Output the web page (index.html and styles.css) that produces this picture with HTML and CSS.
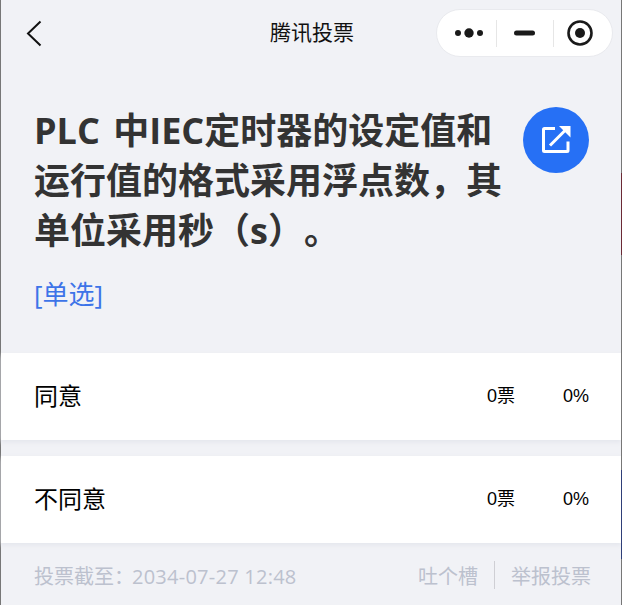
FILE: index.html
```html
<!DOCTYPE html>
<html lang="zh-CN">
<head>
    <meta charset="UTF-8">
    <meta name="viewport" content="width=device-width, initial-scale=1.0">
    <title>腾讯投票</title>
    <link rel="stylesheet" href="styles.css">
</head>
<body>
    <div class="page">
        <header class="nav">
            <svg class="back" width="18" height="28" viewBox="0 0 18 28">
                <path d="M14.500 2.500 L2 14.500 L14.500 26.500" fill="none" stroke="#111" stroke-width="2"/>
            </svg>
            <div class="navTitle">腾讯投票</div>
            <div class="capsule">
                <svg class="capsuleIcon dots" width="28" height="12" viewBox="0 0 28 12">
                    <circle cx="3" cy="6" r="3" fill="#1a1a1a"/>
                    <circle cx="14" cy="6" r="4.700" fill="#1a1a1a"/>
                    <circle cx="25" cy="6" r="3" fill="#1a1a1a"/>
                </svg>
                <span class="capsuleLine lineOne"></span>
                <svg class="capsuleIcon minus" width="21" height="6" viewBox="0 0 21 6">
                    <rect x="0" y="0.500" width="21" height="5" rx="2.500" fill="#1a1a1a"/>
                </svg>
                <span class="capsuleLine lineTwo"></span>
                <svg class="capsuleIcon target" width="26" height="26" viewBox="0 0 26 26">
                    <circle cx="13" cy="13" r="11.500" fill="none" stroke="#1a1a1a" stroke-width="2.600"/>
                    <circle cx="13" cy="13" r="5" fill="#1a1a1a"/>
                </svg>
            </div>
        </header>

        <section class="head">
            <div class="headText">
                <h1>PLC 中IEC定时器的设定值和运行值的格式采用浮点数，其单位采用秒（s）。</h1>
                <div class="voteType">[单选]</div>
            </div>
            <div class="shareBtn">
                <svg width="30" height="30" viewBox="0 0 30 30">
                    <path d="M14 3.500 H3.500 A1 1 0 0 0 2.500 4.500 V25.500 A1 1 0 0 0 3.500 26.500 H26 A1 1 0 0 0 27 25.500 V16.500" fill="none" stroke="#fff" stroke-width="3"/>
                    <path d="M9 20.500 L24 5.500" fill="none" stroke="#fff" stroke-width="3"/>
                    <path d="M18 1 H29.500 V12.500 Z" fill="#fff"/>
                </svg>
            </div>
        </section>

        <div class="options">
            <div class="option">
                <span class="optName">同意</span>
                <span class="optCount">0票</span>
                <span class="optPercent">0%</span>
            </div>
            <div class="option">
                <span class="optName">不同意</span>
                <span class="optCount">0票</span>
                <span class="optPercent">0%</span>
            </div>
        </div>

        <footer class="foot">
            <span class="deadline">投票截至：<span class="deadlineDate">2034-07-27 12:48</span></span>
            <span class="footLinks">
                <span>吐个槽</span>
                <span class="footLine"></span>
                <span>举报投票</span>
            </span>
        </footer>
    </div>
</body>
</html>
```

FILE: styles.css
```css
html, body {
    margin: 0;
    padding: 0;
}

body {
    font-family: "Open Sans", "Noto Sans CJK SC", sans-serif;
    text-spacing-trim: space-all;
    background-color: #f1f2f6;
    color: #000;
}

.page {
    position: relative;
    width: 622px;
    height: 605px;
    box-sizing: border-box;
    border-left: 1px solid #777;
    border-right: 1px solid #777;
    background-color: #f1f2f6;
}

.page::after {
    content: "";
    position: absolute;
    top: 173px;
    right: -1px;
    width: 1px;
    height: 386px;
    background: linear-gradient(to bottom, #6b2a35 0, #6b2a35 82px, #777 82px, #777 297px, #2f3f78 297px, #2f3f78 100%);
}

.nav {
    position: relative;
    height: 66px;
    display: flex;
    align-items: center;
    justify-content: space-between;
    padding: 0 8px 0 25px;
    box-sizing: border-box;
}

.back {
    display: block;
}

.navTitle {
    position: absolute;
    left: 269px;
    top: 19px;
    font-size: 21px;
    line-height: 26px;
    color: #111;
}

.capsule {
    width: 177px;
    height: 48px;
    box-sizing: border-box;
    background-color: #fff;
    border: 1px solid #e9eaee;
    border-radius: 24px;
    display: flex;
    align-items: center;
    padding-left: 18px;
}

.capsuleIcon {
    display: block;
}

.capsuleLine {
    width: 1px;
    height: 27px;
    background-color: #e6e6e6;
}

.lineOne {
    margin-left: 13px;
}

.minus {
    margin-left: 17px;
}

.lineTwo {
    margin-left: 18px;
}

.target {
    margin-left: 13px;
}

.head {
    display: flex;
    justify-content: space-between;
    padding: 40px 32px 0 33px;
    height: 287px;
    box-sizing: border-box;
}

.headText {
    width: 470px;
}

h1 {
    margin: 0;
    font-size: 36px;
    line-height: 50px;
    font-weight: 700;
    word-spacing: 4px;
    color: #333;
}

.voteType {
    margin-top: 20px;
    font-size: 26px;
    line-height: 36px;
    color: #3d74e8;
}

.shareBtn {
    width: 66px;
    height: 66px;
    margin-top: 1px;
    border-radius: 50%;
    background-color: #2670f5;
    display: flex;
    align-items: center;
    justify-content: center;
    flex-shrink: 0;
}

.options {
    display: flex;
    flex-direction: column;
    gap: 16px;
}

.option {
    height: 87px;
    box-sizing: border-box;
    padding: 0 32px 3px 33px;
    background-color: #fff;
    box-shadow: 0 2px 5px #e3e5ec;
    display: flex;
    align-items: center;
}

.optName {
    flex: 1;
    font-size: 24px;
    margin-bottom: 2px;
}

.optCount, .optPercent {
    font-family: "Liberation Sans", "Noto Sans CJK SC", sans-serif;
    font-size: 18px;
    line-height: 24px;
    margin-top: 2px;
}

.optCount {
    width: 30px;
}

.optPercent {
    width: 72px;
    text-align: right;
}

.foot {
    display: flex;
    align-items: center;
    justify-content: space-between;
    height: 60px;
    box-sizing: border-box;
    padding: 4px 30px 0 33px;
    font-size: 20px;
    color: #bcc1ce;
}

.deadlineDate {
    margin-left: -2px;
    letter-spacing: 0.25px;
}

.footLinks {
    display: flex;
    align-items: center;
    gap: 16px;
}

.footLine {
    width: 1px;
    height: 28px;
    background-color: #cfcfd4;
}
```
